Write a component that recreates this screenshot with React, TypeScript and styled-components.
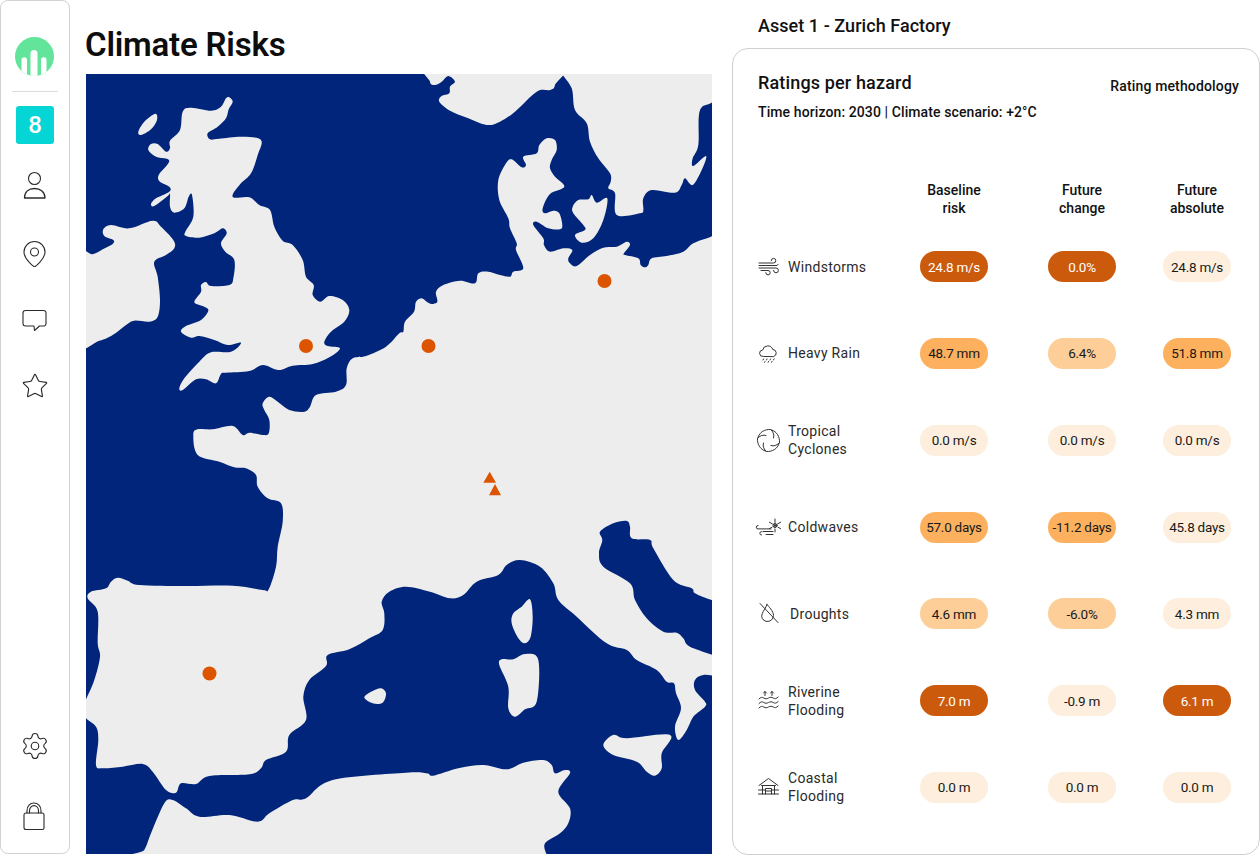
import React from 'react';
import styled, { createGlobalStyle } from 'styled-components';
import { Star, Settings } from 'lucide-react';

const Global = createGlobalStyle`
  html, body { margin: 0; padding: 0; background: #fff; }
  body { font-family: Roboto, "Liberation Sans", sans-serif; color: #111; }
`;

const Page = styled.div`
  display: flex;
  width: 1260px;
  height: 855px;
  overflow: hidden;
  background: #fff;
`;

const Sidebar = styled.nav`
  box-sizing: border-box;
  width: 70px;
  height: 854px;
  flex: none;
  display: flex;
  flex-direction: column;
  align-items: center;
  border: 1px solid #d2d2d2;
  border-radius: 8px;
  padding-top: 36px;
  padding-bottom: 2px;
`;

const Logo = styled.svg`
  display: block;
  width: 39px;
  height: 39px;
  flex: none;
  margin-left: -1px;
`;

const Divider = styled.div`
  width: 46px;
  height: 1px;
  background: #dcdcdc;
  margin-top: 15px;
  flex: none;
`;

const Badge = styled.div`
  width: 38px;
  height: 38px;
  flex: none;
  margin-top: 14px;
  margin-bottom: 7px;
  border-radius: 3px;
  background: #06d5d5;
  color: #fff;
  font-size: 24px;
  font-weight: 500;
  display: flex;
  align-items: center;
  justify-content: center;
`;

const NavItem = styled.div<{ $h?: number }>`
  height: ${p => p.$h ?? 67}px;
  width: 100%;
  flex: none;
  display: flex;
  align-items: center;
  justify-content: center;
  color: #2b2b2b;
`;

const NavSpacer = styled.div`
  flex: 1;
`;

const MapColumn = styled.main`
  width: 642px;
  flex: none;
  padding-left: 16px;
  box-sizing: border-box;
`;

const Title = styled.h1`
  margin: 0 0 0 -1px;
  padding-top: 27px;
  height: 74px;
  box-sizing: border-box;
  font-size: 33px;
  line-height: 36px;
  font-weight: 600;
  letter-spacing: -0.2px;
  color: #0d0d0d;
`;

const MapSvg = styled.svg`
  display: block;
  width: 626px;
  height: 780px;
  background: #01257a;
`;

const RightColumn = styled.section`
  margin-left: 20px;
  width: 528px;
  flex: none;
  display: flex;
  flex-direction: column;
`;

const AssetTitle = styled.h2`
  margin: 0;
  height: 48px;
  padding: 15px 0 0 26px;
  box-sizing: border-box;
  font-size: 18px;
  line-height: 21px;
  font-weight: 500;
  letter-spacing: 0.05px;
`;

const Card = styled.div`
  flex: 1;
  box-sizing: border-box;
  border: 1px solid #cfcfcf;
  border-radius: 16px;
  padding: 23px 0 0 25px;
`;

const CardHead = styled.div`
  display: flex;
  justify-content: space-between;
  align-items: flex-start;
  padding-right: 20px;
`;

const CardTitle = styled.h3`
  margin: 0;
  font-size: 18px;
  line-height: 22px;
  font-weight: 500;
  letter-spacing: 0.15px;
`;

const Method = styled.a`
  font-size: 14px;
  line-height: 18px;
  font-weight: 500;
  margin-top: 5px;
  letter-spacing: 0.15px;
`;

const SubTitle = styled.p`
  margin: 8px 0 0;
  font-size: 14px;
  line-height: 18px;
  font-weight: 500;
  letter-spacing: 0.1px;
`;

const Table = styled.div`
  display: grid;
  grid-template-columns: 132px 128px 128px 102px;
  grid-auto-rows: 86.8px;
  margin-top: 15.5px;
`;

const HeaderRow = styled.div`
  grid-column: 1 / -1;
  display: grid;
  grid-template-columns: subgrid;
  align-items: end;
  height: 86.8px;
  padding-bottom: 6px;
  box-sizing: border-box;
`;

const HeadCell = styled.div`
  text-align: center;
  font-size: 14px;
  line-height: 18px;
  font-weight: 500;
  white-space: pre-line;
`;

const Blank = styled.div``;

const HazardCell = styled.div`
  display: flex;
  align-items: center;
  margin-left: -3px;
`;

const HazardIcon = styled.svg`
  width: 27px;
  height: 27px;
  flex: none;
  fill: none;
  stroke: #333;
  stroke-width: 1;
  stroke-linecap: round;
  stroke-linejoin: round;
  overflow: visible;
`;

const HazardName = styled.div<{ $shift?: number }>`
  margin-left: ${p => 6 + (p.$shift ?? 0)}px;
  font-size: 14px;
  line-height: 18px;
  color: #2a2a2a;
  letter-spacing: 0.3px;
  white-space: pre-line;
`;

const ValueCell = styled.div`
  display: flex;
  align-items: center;
  justify-content: center;
`;

type Tone = 'dark' | 'mid' | 'soft' | 'pale';
const toneBg: Record<Tone, string> = { dark: '#cb5a0c', mid: '#fdb05e', soft: '#fdce98', pale: '#fdeedd' };

const Pill = styled.div<{ $tone: Tone }>`
  width: 68px;
  height: 31px;
  border-radius: 15.5px;
  background: ${p => toneBg[p.$tone]};
  color: ${p => (p.$tone === 'dark' ? '#fff' : '#1a1a1a')};
  font-size: 13.5px;
  letter-spacing: -0.25px;
  white-space: nowrap;
  display: flex;
  align-items: center;
  justify-content: center;
`;

type P = [number, number];
const at = (ox: number, oy: number, pts: number[][]): P[] => pts.map(([x, y]) => [ox + x / 3, oy + y / 3] as P);
const Z5 = (p: number[][]) => at(86, 70, p);
const Z6 = (p: number[][]) => at(400, 70, p);
const Z7 = (p: number[][]) => at(86, 460, p);
const Z8 = (p: number[][]) => at(400, 460, p);

const smooth = (pts: P[]): string => {
  const n = pts.length;
  let d = `M${pts[0][0].toFixed(1)} ${pts[0][1].toFixed(1)}`;
  for (let i = 0; i < n; i++) {
    const p0 = pts[(i - 1 + n) % n];
    const p1 = pts[i];
    const p2 = pts[(i + 1) % n];
    const p3 = pts[(i + 2) % n];
    const c1x = p1[0] + (p2[0] - p0[0]) / 6;
    const c1y = p1[1] + (p2[1] - p0[1]) / 6;
    const c2x = p2[0] - (p3[0] - p1[0]) / 6;
    const c2y = p2[1] - (p3[1] - p1[1]) / 6;
    d += `C${c1x.toFixed(1)} ${c1y.toFixed(1)} ${c2x.toFixed(1)} ${c2y.toFixed(1)} ${p2[0].toFixed(1)} ${p2[1].toFixed(1)}`;
  }
  return d + 'Z';
};

const britain = Z5([[430,82],[440,95],[428,118],[420,145],[395,170],[365,190],[372,208],[400,206],[470,200],[525,210],[515,255],[495,310],[465,340],[442,370],[445,383],[490,382],[520,405],[552,420],[565,470],[590,512],[620,525],[650,570],[660,620],[683,645],[680,675],[703,695],[730,678],[770,690],[790,720],[775,755],[735,785],[715,815],[725,828],[762,835],[730,862],[680,882],[620,887],[578,900],[530,885],[490,903],[420,908],[405,912],[390,940],[360,928],[330,928],[290,960],[280,955],[295,925],[340,875],[375,847],[435,845],[465,818],[425,825],[385,810],[340,798],[315,803],[285,785],[300,768],[345,750],[367,722],[355,710],[325,697],[345,665],[345,645],[360,636],[375,648],[430,645],[442,625],[445,570],[418,545],[405,520],[422,490],[410,475],[385,490],[340,503],[300,498],[298,485],[322,440],[318,375],[308,380],[295,415],[265,428],[252,410],[252,372],[245,378],[205,408],[195,402],[210,385],[250,365],[250,350],[222,335],[218,315],[250,272],[210,260],[187,240],[195,222],[215,222],[240,245],[252,235],[252,212],[282,180],[290,125],[315,113],[375,122],[405,110],[420,85]]);
const hebrides = Z5([[208,131],[213,150],[195,178],[165,195],[157,185],[175,155]]);
const ireland = Z5([[-30,555],[20,553],[50,538],[80,522],[82,510],[55,498],[52,478],[75,465],[130,475],[200,452],[225,470],[262,510],[265,535],[240,555],[205,575],[215,620],[222,690],[215,740],[190,755],[145,752],[120,765],[80,795],[40,812],[-30,820]]);
const mainland: P[] = [
  ...Z6([[933,500],[880,520],[850,545],[800,558],[755,565],[745,585],[735,592],[722,585],[715,565],[675,555],[672,550],[690,525],[680,515],[650,530],[610,533],[570,555],[530,588],[510,580],[505,565],[517,540],[490,535],[450,545],[432,525],[430,505],[400,465],[410,455],[445,475],[480,478],[487,465],[478,430],[460,422],[435,430],[428,415],[450,372],[493,350],[465,320],[450,295],[455,270],[470,240],[465,210],[440,205],[418,225],[410,250],[370,260],[378,285],[365,292],[335,268],[318,280],[295,330],[298,390],[325,445],[330,475],[350,520],[348,540],[370,595],[340,605],[330,620],[300,615],[265,605],[235,610],[225,640],[180,632],[130,645],[108,665],[112,695],[95,702],[80,695],[65,685],[48,695],[42,725],[15,755],[10,785]]),
  ...Z5([[940,790],[900,830],[840,858],[800,865],[782,895],[780,945],[750,965],[690,975],[672,1010],[655,1025],[610,1020],[575,995],[550,980],[530,1000],[535,1020],[550,1050],[548,1090],[530,1095],[490,1088],[470,1095],[440,1068],[380,1078],[335,1078],[322,1095],[335,1155],[400,1175],[445,1192]]),
  ...Z7([[480,25],[510,45],[515,80],[545,115],[585,130],[590,185],[575,260],[570,320],[548,388],[530,390],[440,377],[300,378],[160,375],[125,362],[95,353],[75,365],[60,385],[15,395],[5,415],[35,455],[35,550],[42,590],[25,660],[0,718],[-15,745],[0,775],[30,800],[37,840],[30,915],[50,925],[110,920],[170,912],[200,935],[240,990],[270,998],[285,970],[330,972],[370,948],[490,943],[525,925],[540,900],[600,875],[610,825],[660,780],[652,710],[670,660],[720,618],[725,585],[790,568],[850,535],[890,510],[895,460],[887,425],[910,395],[960,380]]),
  ...Z8([[90,395],[150,415],[190,405],[230,365],[295,345],[320,315],[360,300],[420,320],[460,370],[475,420],[530,470],[620,550],[680,570],[710,600],[770,630],[800,665],[822,670],[828,700],[843,745],[825,800],[835,840],[860,810],[880,770],[915,740],[915,725],[885,690],[885,660],[910,645],[960,646],[985,620],[960,594],[870,560],[850,535],[830,518],[790,515],[740,475],[705,420],[690,370],[610,320],[597,280],[607,240],[600,215],[640,190],[680,183],[690,200],[695,235],[750,240],[760,265],[820,360],[875,385],[885,400],[935,420],[990,430]]),
  [790, 500], [790, 240], [720, 233],
];
const norway = Z6([[98,-20],[90,35],[105,45],[125,35],[145,18],[165,35],[150,50],[148,70],[125,78],[118,95],[150,122],[205,145],[260,165],[300,155],[345,125],[410,65],[450,60],[465,45],[472,-20]]);
const sweden = Z6([[476,-20],[485,10],[515,55],[525,120],[560,160],[570,215],[595,265],[630,310],[632,335],[625,355],[645,370],[650,435],[720,430],[730,420],[730,385],[755,360],[825,368],[845,345],[855,325],[878,345],[905,300],[918,258],[880,288],[878,265],[895,225],[900,120],[945,88],[1000,-20]]);
const zealand = Z6([[575,375],[590,398],[622,385],[610,450],[580,505],[545,518],[525,495],[555,480],[550,465],[520,430],[518,410],[535,390],[565,388]]);
const corsica = Z8([[390,418],[398,470],[392,530],[375,550],[355,535],[335,490],[340,460],[365,440]]);
const sardinia = Z8([[375,582],[415,600],[410,725],[375,748],[345,770],[325,745],[325,680],[298,615],[305,598],[340,598]]);
const mallorca = Z7([[885,685],[900,700],[890,728],[860,730],[835,712],[860,693]]);
const sicily = Z8([[610,855],[640,825],[680,835],[810,825],[785,880],[785,925],[765,947],[740,935],[710,905],[640,885]]);
const africa: P[] = [
  ...Z7([[140,1215],[175,1170],[195,1120],[235,1030],[260,1020],[300,1045],[340,1070],[430,1065],[515,1085],[550,1060],[620,1020],[660,1015],[740,960],[960,938]]),
  ...Z8([[80,940],[100,947],[175,925],[250,915],[320,928],[370,908],[430,900],[455,915],[465,940],[495,930],[510,940],[475,995],[510,1045],[505,1090],[480,1120],[435,1150],[440,1185],[450,1215]]),
];
const lands = [britain, hebrides, ireland, mainland, norway, sweden, zealand, corsica, sardinia, mallorca, sicily, africa];

const ClimateMap = () => (
  <MapSvg viewBox="86 74 626 780" role="img" aria-label="Map of western Europe">
    {lands.map((l, i) => <path key={i} d={smooth(l)} fill="#ededed" />)}
    <circle cx="306" cy="346" r="7" fill="#dc5400" />
    <circle cx="428.5" cy="346" r="7" fill="#dc5400" />
    <circle cx="604.5" cy="281" r="7" fill="#dc5400" />
    <circle cx="209.5" cy="673.5" r="7" fill="#dc5400" />
    <path d="M489.7 471.7L496 482.7H483.3Z" fill="#dc5400" />
    <path d="M495 484L501 495.3H489Z" fill="#dc5400" />
  </MapSvg>
);

const LogoMark = () => (
  <Logo viewBox="0 0 39 39">
    <defs><clipPath id="logoClip"><circle cx="19.5" cy="19.5" r="19.5" /></clipPath></defs>
    <circle cx="19.5" cy="19.5" r="19.5" fill="#62e59b" />
    <g clipPath="url(#logoClip)" fill="#fff">
      <path d="M6.500 39V23a2.750 2.750 0 0 1 5.500 0V39Z" />
      <path d="M15.500 39V16.500a3.500 3.500 0 0 1 7 0V39Z" />
      <path d="M26 39V23a2.750 2.750 0 0 1 5.500 0V39Z" />
    </g>
  </Logo>
);

const stroke = { fill: 'none', stroke: '#2b2b2b', strokeWidth: 1.1, strokeLinejoin: 'round' as const, strokeLinecap: 'round' as const };

const PersonIcon = () => (
  <svg width="30" height="30" viewBox="0 0 30 30" {...stroke}>
    <circle cx="14.5" cy="8.5" r="6" />
    <path d="M4.500 28C4.500 22 8.500 18.500 14.500 18.500S25 22 25 28Z" strokeWidth="1.3" />
  </svg>
);
const PinIcon = () => (
  <svg width="30" height="30" viewBox="0 0 30 30" {...stroke}>
    <path d="M14.500 30C14.500 30 4 22.500 4 15A10.500 10.500 0 0 1 25 15C25 22.500 14.500 30 14.500 30Z" />
    <circle cx="14.5" cy="15" r="4" />
  </svg>
);
const ChatIcon = () => (
  <svg width="30" height="30" viewBox="0 0 30 30" {...stroke}>
    <path d="M5.500 6.500H23.500a2.500 2.500 0 0 1 2.500 2.500V19.500a2.500 2.500 0 0 1-2.500 2.500H19.500L14.500 26.500L14 22H5.500A2.500 2.500 0 0 1 3 19.500V9A2.500 2.500 0 0 1 5.500 6.500Z" />
  </svg>
);
const LockIcon = () => (
  <svg width="30" height="30" viewBox="0 0 30 30" {...stroke}>
    <path d="M6.500 12H22a2 2 0 0 1 2 2V27a1.500 1.500 0 0 1-1.500 1.500H6A2 2 0 0 1 4 26.500V14a2 2 0 0 1 2.500-2Z" />
    <path d="M7 12V9.500C7 5 10 2 14 2S21 5 21 9.500V12" />
    <path d="M9.500 12V9.800C9.500 6.800 11.500 4.600 14 4.600S18.500 6.800 18.500 9.800V12" />
  </svg>
);

const WindIcon = () => (
  <HazardIcon viewBox="0 0 27 27">
    <path d="M4 10h14.500a2.300 2.300 0 1 0-2.300-2.300" />
    <path d="M4 12.500H22a2 2 0 0 0 1-1" />
    <path d="M4 15h17a2.400 2.400 0 1 1-2.400 2.400" />
    <path d="M6 17.500h7a2.200 2.200 0 1 1-2.200 2.200" />
  </HazardIcon>
);
const RainIcon = () => (
  <HazardIcon viewBox="0 0 27 27">
    <path d="M8 16.500a3.200 3.200 0 0 1-.4-6.400A5.300 5.300 0 0 1 17.800 9.500a3.600 3.600 0 0 1 1 7Z" />
    <path d="M8.500 19l-.5 1M12 19l-.5 1M15.500 19l-.5 1M19 19l-.5 1M10 21.500l-.4.800M13.500 21.500l-.4.800M17 21.500l-.4.800" />
  </HazardIcon>
);
const CycloneIcon = () => (
  <HazardIcon viewBox="0 0 27 27">
    {[0, 90, 180, 270].map(a => (
      <path
        key={a}
        transform={`rotate(${a} 13.5 13.5)`}
        d="M15.500 2.500C10 2 4.500 5 2.800 11C5.500 8.500 8 7.500 11 8.500"
      />
    ))}
  </HazardIcon>
);
const ColdIcon = () => (
  <HazardIcon viewBox="0 0 27 27">
    <path d="M20 5v13M14.400 8.200l11.200 6.500M25.600 8.200l-11.200 6.500" strokeDasharray="3.500 1.500" />
    <circle cx="20" cy="11.500" r="2" />
    <path d="M3 11.500a1.700 1.700 0 0 0 0 3.400H16" />
    <path d="M8 17.500H18" />
    <path d="M6.500 21a1.700 1.700 0 0 1 0-3.400" />
    <path d="M11 20.500H18" />
  </HazardIcon>
);
const DropIcon = () => (
  <HazardIcon viewBox="0 0 27 27">
    <path d="M12 4.500C13.500 6.500 18.500 11 18.500 15.500A6 6 0 0 1 8 19.500C6.500 18 6.500 15.500 7.300 13.500C8.200 11 11 7.500 12 4.500Z" />
    <path d="M5 3.500L23 22.500" />
  </HazardIcon>
);
const RiverIcon = () => (
  <HazardIcon viewBox="0 0 27 27">
    <path d="M10 8.500V4.500M8.500 6L10 4.500L11.500 6M17 8.500V4.500M15.500 6L17 4.500L18.500 6" />
    <path d="M4 12c2-2 3.200-2 4.800-1s3 1 4.700 0s3.200-1 4.700 0s3 1 5-1" />
    <path d="M4 16.500c2-2 3.200-2 4.800-1s3 1 4.700 0s3.200-1 4.700 0s3 1 5-1" />
    <path d="M4 21c2-2 3.200-2 4.800-1s3 1 4.700 0s3.200-1 4.700 0s3 1 5-1" />
  </HazardIcon>
);
const CoastIcon = () => (
  <HazardIcon viewBox="0 0 27 27">
    <path d="M4 11.500L13.500 4.500L23 11.500M6.500 11.500H20.500" />
    <path d="M7.500 11.500V20M19.500 11.500V20M10.500 20V14.500H16.500V20" />
    <path d="M3.500 16H10.500M16.500 16H23.500M3.500 20H23.500M10.500 17H16.500" />
  </HazardIcon>
);

type Row = { icon: React.ReactNode; name: string; shift?: number; cells: [string, Tone][] };
const rows: Row[] = [
  { icon: <WindIcon />, name: 'Windstorms', cells: [['24.8 m/s', 'dark'], ['0.0%', 'dark'], ['24.8 m/s', 'pale']] },
  { icon: <RainIcon />, name: 'Heavy Rain', cells: [['48.7 mm', 'mid'], ['6.4%', 'soft'], ['51.8 mm', 'mid']] },
  { icon: <CycloneIcon />, name: 'Tropical\nCyclones', cells: [['0.0 m/s', 'pale'], ['0.0 m/s', 'pale'], ['0.0 m/s', 'pale']] },
  { icon: <ColdIcon />, name: 'Coldwaves', cells: [['57.0 days', 'mid'], ['-11.2 days', 'mid'], ['45.8 days', 'pale']] },
  { icon: <DropIcon />, name: 'Droughts', shift: 2, cells: [['4.6 mm', 'soft'], ['-6.0%', 'soft'], ['4.3 mm', 'pale']] },
  { icon: <RiverIcon />, name: 'Riverine\nFlooding', cells: [['7.0 m', 'dark'], ['-0.9 m', 'pale'], ['6.1 m', 'dark']] },
  { icon: <CoastIcon />, name: 'Coastal\nFlooding', cells: [['0.0 m', 'pale'], ['0.0 m', 'pale'], ['0.0 m', 'pale']] },
];

export default function App() {
  return (
    <Page>
      <Global />
      <Sidebar>
        <LogoMark />
        <Divider />
        <Badge>8</Badge>
        <NavItem><PersonIcon /></NavItem>
        <NavItem><PinIcon /></NavItem>
        <NavItem><ChatIcon /></NavItem>
        <NavItem><Star size={28} strokeWidth={1} /></NavItem>
        <NavSpacer />
        <NavItem $h={70}><Settings size={30} strokeWidth={0.9} /></NavItem>
        <NavItem $h={70}><LockIcon /></NavItem>
      </Sidebar>
      <MapColumn>
        <Title>Climate Risks</Title>
        <ClimateMap />
      </MapColumn>
      <RightColumn>
        <AssetTitle>Asset 1 - Zurich Factory</AssetTitle>
        <Card>
          <CardHead>
            <CardTitle>Ratings per hazard</CardTitle>
            <Method>Rating methodology</Method>
          </CardHead>
          <SubTitle>Time horizon: 2030 | Climate scenario: +2°C</SubTitle>
          <Table>
            <HeaderRow>
              <Blank />
              <HeadCell>{'Baseline\nrisk'}</HeadCell>
              <HeadCell>{'Future\nchange'}</HeadCell>
              <HeadCell>{'Future\nabsolute'}</HeadCell>
            </HeaderRow>
            {rows.map(r => (
              <React.Fragment key={r.name}>
                <HazardCell>
                  {r.icon}
                  <HazardName $shift={r.shift}>{r.name}</HazardName>
                </HazardCell>
                {r.cells.map(([v, t], i) => (
                  <ValueCell key={i}><Pill $tone={t}>{v}</Pill></ValueCell>
                ))}
              </React.Fragment>
            ))}
          </Table>
        </Card>
      </RightColumn>
    </Page>
  );
}
